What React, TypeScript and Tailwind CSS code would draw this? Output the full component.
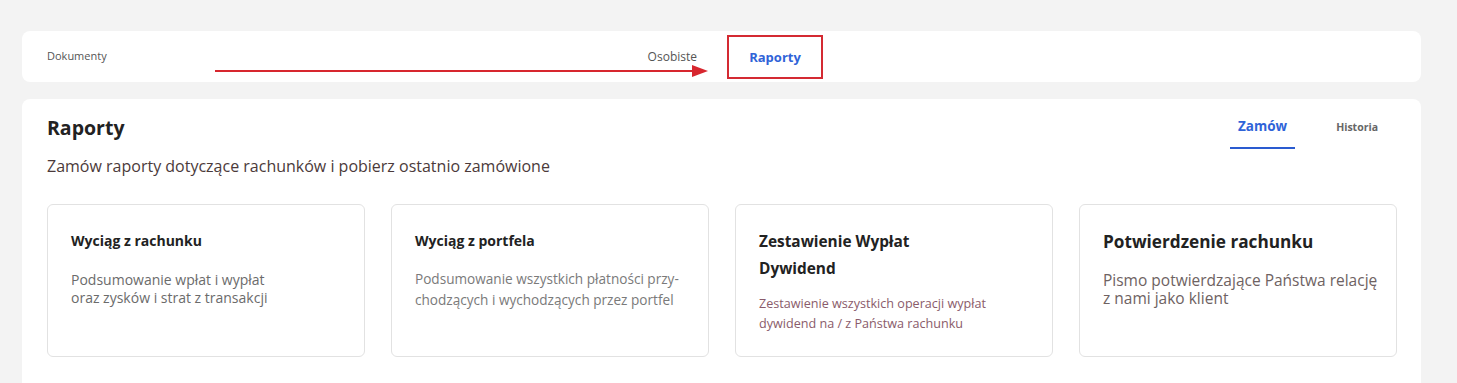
import React from "react";

export default function App() {
  return (
    <div
      className="min-h-screen bg-[#f3f3f3] pl-[22px] pr-[36px] pt-[31px]"
      style={{ fontFamily: '"Open Sans", "Noto Sans", sans-serif' }}
    >
      {/* Top breadcrumb / tabs bar */}
      <div className="relative flex h-[51px] items-center rounded-[8px] bg-white pl-[25px]">
        <div className="flex w-[650px] items-center justify-between">
          <span className="text-[11px] text-[#555]">Dokumenty</span>
          <span className="text-[12px] text-[#555]">Osobiste</span>
        </div>
        <div className="relative ml-[30px] flex h-[44px] w-[96px] items-center justify-center pt-[3px]">
          <span className="text-[13px] font-bold text-[#2f63d8]">Raporty</span>
          <div className="pointer-events-none absolute inset-0 border-2 border-[#d42a32]" />
        </div>
        {/* annotation arrow */}
        <svg
          className="pointer-events-none absolute left-[193px] top-[33px]"
          width="500"
          height="14"
          viewBox="0 0 500 14"
        >
          <line x1="0" y1="7" x2="478" y2="7" stroke="#d7262e" strokeWidth="2" />
          <polygon points="477,1 493,7 477,13" fill="#d7262e" />
        </svg>
      </div>

      {/* Main card */}
      <div className="mt-[17px] rounded-t-[8px] bg-white pb-[40px] pl-[25px] pr-[24px] pt-[17px]">
        <div className="flex items-start justify-between">
          <h1 className="text-[19.5px] font-bold leading-[24px] text-[#222]">Raporty</h1>
          <div className="mr-[11px] flex items-start gap-[33px]">
            <div className="border-b-2 border-[#2a5bd0] px-2 pb-[11px] text-[13.5px] font-bold leading-[20px] text-[#2f63d8]">
              Zamów
            </div>
            <div className="px-2 pt-[1px] text-[10.5px] font-bold leading-[20px] text-[#666]">
              Historia
            </div>
          </div>
        </div>
        <p className="mt-[6px] text-[16px] leading-[22px] text-[#4b3a3a]">
          Zamów raporty dotyczące rachunków i pobierz ostatnio zamówione
        </p>

        <div className="mt-[27px] grid grid-cols-4 gap-[26px]">
          <div className="h-[153px] rounded-[6px] border border-[#e2e2e2] px-[23px] pt-[26px]">
            <h2 className="text-[14px] font-bold leading-[20px] text-[#222]">Wyciąg z rachunku</h2>
            <p className="mt-[20px] whitespace-nowrap text-[14px] leading-[18px] text-[#6b6b6b]">
              Podsumowanie wpłat i wypłat
              <br />
              oraz zysków i strat z transakcji
            </p>
          </div>
          <div className="h-[153px] rounded-[6px] border border-[#e2e2e2] px-[23px] pt-[26px]">
            <h2 className="text-[14px] font-bold leading-[20px] text-[#222]">Wyciąg z portfela</h2>
            <p className="mt-[17px] whitespace-nowrap text-[13.6px] leading-[21px] text-[#7a7a7a]">
              Podsumowanie wszystkich płatności przy-
              <br />
              chodzących i wychodzących przez portfel
            </p>
          </div>
          <div className="h-[153px] rounded-[6px] border border-[#e2e2e2] px-[23px] pt-[23px]">
            <h2 className="text-[15.4px] font-bold leading-[27px] text-[#222]">
              Zestawienie Wypłat
              <br />
              Dywidend
            </h2>
            <p className="mt-[12px] whitespace-nowrap text-[12.6px] leading-[20px] text-[#8a5b6a]">
              Zestawienie wszystkich operacji wypłat
              <br />
              dywidend na / z Państwa rachunku
            </p>
          </div>
          <div className="h-[153px] rounded-[6px] border border-[#e2e2e2] pl-[23px] pr-[10px] pt-[26px]">
            <h2 className="text-[17.2px] font-bold leading-[22px] text-[#222]">Potwierdzenie rachunku</h2>
            <p className="mt-[18px] whitespace-nowrap text-[15.5px] leading-[18px] text-[#6e6262]">
              Pismo potwierdzające Państwa relację
              <br />
              z nami jako klient
            </p>
          </div>
        </div>
      </div>
    </div>
  );
}
